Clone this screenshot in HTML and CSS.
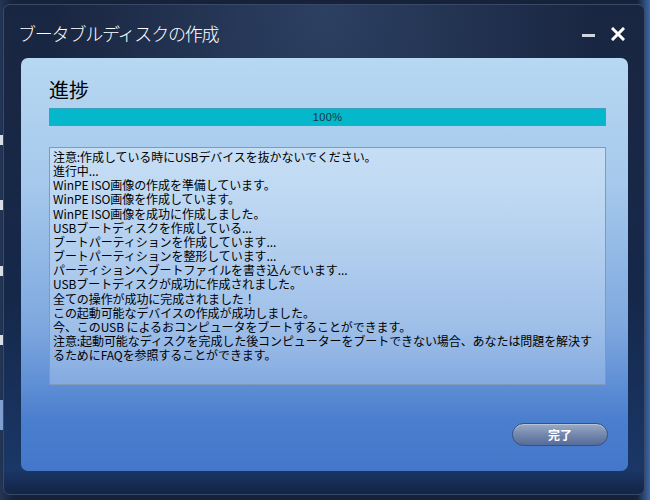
FILE: index.html
```html
<!DOCTYPE html>
<html lang="ja">
<head>
    <meta charset="UTF-8">
    <title>ブータブルディスクの作成</title>
    <link rel="stylesheet" href="styles.css">
</head>
<body>

<div class="backdrop-left">
    <span></span><span></span><span></span><span></span><span></span>
</div>

<div class="window">
    <div class="titlebar">
        <div class="title">ブータブルディスクの作成</div>
        <div class="controls">
            <span class="btn-min"></span>
            <span class="btn-close">
                <svg width="14" height="14" viewBox="0 0 14 14">
                    <path d="M2 2 L12 12 M12 2 L2 12" stroke="#fff" stroke-width="3" stroke-linecap="square"/>
                </svg>
            </span>
        </div>
    </div>

    <div class="panel">
        <h2>進捗</h2>
        <div class="progress">
            <div class="progress-fill"></div>
            <span class="progress-text">100%</span>
        </div>

        <div class="log">
            <div>注意:作成している時にUSBデバイスを抜かないでください。</div>
            <div>進行中...</div>
            <div>WinPE ISO画像の作成を準備しています。</div>
            <div>WinPE ISO画像を作成しています。</div>
            <div>WinPE ISO画像を成功に作成しました。</div>
            <div>USBブートディスクを作成している...</div>
            <div>ブートパーティションを作成しています...</div>
            <div>ブートパーティションを整形しています...</div>
            <div>パーティションへブートファイルを書き込んでいます...</div>
            <div>USBブートディスクが成功に作成されました。</div>
            <div>全ての操作が成功に完成されました！</div>
            <div>この起動可能なデバイスの作成が成功しました。</div>
            <div>今、このUSB によるおコンピュータをブートすることができます。</div>
            <div>注意:起動可能なディスクを完成した後コンピューターをブートできない場合、あなたは問題を解決す</div>
            <div>るためにFAQを参照することができます。</div>
        </div>

        <div class="actions">
            <button class="btn-done">完了</button>
        </div>
    </div>
</div>

</body>
</html>
```

FILE: styles.css
```css
body {
    margin: 0;
    padding: 4px 5px 5px 3px;
    width: 650px;
    height: 500px;
    box-sizing: border-box;
    background: linear-gradient(to right, #233656 0%, #16223a 2%, #16223a 98%, #3d69a8 100%);
    font-family: "Noto Sans CJK JP", "Liberation Sans", sans-serif;
    overflow: hidden;
    position: relative;
}
.backdrop-left {
    position: absolute;
    left: 0;
    top: 0;
    width: 3px;
    height: 500px;
}
.backdrop-left span {
    position: absolute;
    left: 0;
    width: 3px;
    height: 10px;
    background-color: #d8dde6;
}
.backdrop-left span:nth-child(1) { top: 135px; }
.backdrop-left span:nth-child(2) { top: 200px; }
.backdrop-left span:nth-child(3) { top: 266px; }
.backdrop-left span:nth-child(4) { top: 335px; }
.backdrop-left span:nth-child(5) { top: 400px; background-color: #7f9fd0; height: 30px; }

.window {
    height: 491px;
    border-radius: 7px;
    border: 1px solid #3a4a66;
    box-sizing: border-box;
    background:
        radial-gradient(ellipse at 50% 0%, rgba(60, 85, 125, 0.55), rgba(0, 0, 0, 0) 60%),
        linear-gradient(to bottom, #1a2641 0%, #15284a 60%, #1a3767 95%, #132446 100%);
    display: flex;
    flex-direction: column;
}
.titlebar {
    height: 53px;
    display: flex;
    align-items: center;
    justify-content: space-between;
    padding: 0 19px 0 14px;
}
.title {
    color: #fff;
    font-size: 18px;
    font-weight: 300;
    letter-spacing: -1.2px;
    margin-top: 2px;
}
.controls {
    display: flex;
    align-items: center;
    gap: 16px;
    margin-top: 5px;
}
.btn-min {
    display: block;
    width: 13px;
    height: 3px;
    background-color: #d0d6e0;
    margin-top: 3px;
}
.btn-close {
    display: block;
    width: 14px;
    height: 14px;
}
.btn-close svg {
    display: block;
}

.panel {
    margin: 0 16px 0 17px;
    height: 413px;
    border-radius: 7px;
    background: linear-gradient(to bottom, #b7d8f2 0%, #a6c9ec 30%, #7ea8df 65%, #4a7ece 88%, #4477c9 100%);
    padding: 19px 22px 0 28px;
    box-sizing: border-box;
}
h2 {
    margin: 0;
    font-size: 20px;
    font-weight: normal;
    line-height: 26px;
    color: #000;
}
.progress {
    position: relative;
    margin-top: 5px;
    height: 18px;
    border: 1px solid #3aa2bf;
    background-color: #a9cbe9;
    box-sizing: border-box;
}
.progress-fill {
    width: 100%;
    height: 100%;
    background-color: #05b7cb;
}
.progress-text {
    position: absolute;
    left: 0;
    right: 0;
    top: 0;
    text-align: center;
    font-family: "Liberation Sans", sans-serif;
    font-size: 11px;
    line-height: 16px;
    letter-spacing: 0.4px;
    color: #1b3440;
}
.log {
    margin-top: 21px;
    height: 238px;
    border: 1px solid #7f9bb6;
    background: linear-gradient(to bottom, rgba(220, 236, 250, 0.55), rgba(200, 220, 245, 0.35));
    box-sizing: border-box;
    padding: 2px 3px;
    font-size: 12px;
    line-height: 14.15px;
    color: #000;
    letter-spacing: -0.08px;
    white-space: nowrap;
    overflow: hidden;
}
.actions {
    display: flex;
    justify-content: flex-end;
    margin-top: 38px;
}
.btn-done {
    width: 96px;
    height: 23px;
    border-radius: 12px;
    border: 1px solid #3a4f7e;
    background: linear-gradient(to bottom, #9aabc6 0%, #7488ad 50%, #566c98 100%);
    color: #fff;
    font-family: "Noto Sans CJK JP", sans-serif;
    font-size: 12px;
    font-weight: bold;
    line-height: 20px;
    padding: 0;
    margin-right: -2px;
    box-shadow: inset 0 1px 0 rgba(255, 255, 255, 0.3);
}
```
